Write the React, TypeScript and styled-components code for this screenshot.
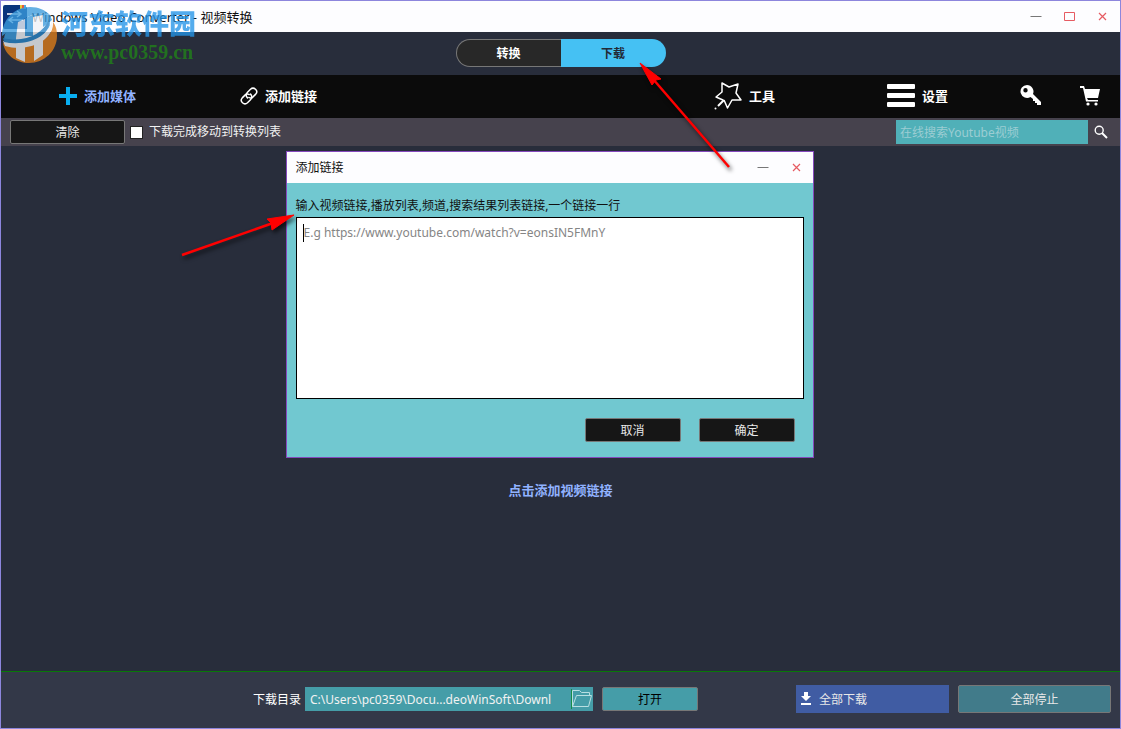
import React from "react";
import styled, { createGlobalStyle } from "styled-components";

const GlobalStyle = createGlobalStyle`
  *, *::before, *::after { box-sizing: border-box; }
  body {
    margin: 0;
    font-family: "Noto Sans", "Noto Sans CJK SC", sans-serif;
    font-size: 12px;
    line-height: 18px;
    color: #fff;
  }
  button, input, textarea { font: inherit; margin: 0; }
  button { cursor: pointer; }
  svg { display: block; flex: none; }
`;

const Window = styled.div`
  position: relative;
  display: flex;
  flex-direction: column;
  min-height: 100vh;
  overflow: hidden;
  border: 1px solid #8d86dd;
  background: #282d3b;
`;

const TitleBar = styled.header`
  display: flex;
  align-items: center;
  height: 31px;
  padding: 0 12px 0 2px;
  background: #fdfdff;
  color: #111;
`;

const AppTitle = styled.h1`
  flex: 1;
  margin: 0 0 0 5px;
  font-size: 13px;
  font-weight: 400;
`;

const WindowControls = styled.div<{ $gap: number }>`
  display: flex;
  gap: ${(p) => p.$gap}px;
`;

const IconButton = styled.button`
  display: grid;
  place-items: center;
  padding: 0;
  border: 0;
  background: none;
  color: #fff;
`;

const ModeBar = styled.div`
  display: flex;
  justify-content: center;
  height: 43px;
  padding: 7px 0 8px;
`;

const ModeTab = styled.button<{ $active?: boolean }>`
  width: 105px;
  height: 28px;
  padding: 2px 0 0;
  font-weight: 700;
  border: ${(p) => (p.$active ? "0" : "1px solid #777")};
  border-right: 0;
  border-radius: ${(p) => (p.$active ? "0 14px 14px 0" : "14px 0 0 14px")};
  background: ${(p) => (p.$active ? "#45c1f3" : "#282828")};
  color: ${(p) => (p.$active ? "#222a36" : "#fff")};
`;

const Toolbar = styled.nav`
  display: flex;
  justify-content: space-between;
  height: 43px;
  padding: 0 20px 2px 58px;
  background: #0b0b0b;
`;

const ToolGroup = styled.div<{ $gap: number }>`
  display: flex;
  align-items: center;
  gap: ${(p) => p.$gap}px;
`;

const ToolButton = styled.button<{ $accent?: boolean }>`
  display: flex;
  align-items: center;
  gap: 7px;
  padding: 0;
  border: 0;
  background: none;
  font-size: 13px;
  font-weight: 700;
  color: ${(p) => (p.$accent ? "#91b2ff" : "#fff")};
`;

const QuickActions = styled.div`
  display: flex;
  align-items: center;
  gap: 39px;
  margin-left: -40px;
`;

const FilterBar = styled.div`
  display: flex;
  align-items: center;
  height: 28px;
  padding: 0 12px 0 9px;
  background: #46424d;
`;

const Button = styled.button<{ $width: number; $tone?: "teal" | "muted" }>`
  width: ${(p) => p.$width}px;
  height: ${(p) => (p.$tone === "muted" ? 28 : 24)}px;
  padding: 2px 0 0;
  border: 1px solid #777;
  border-radius: 2px;
  background: ${(p) =>
    p.$tone === "teal" ? "#459da8" : p.$tone === "muted" ? "#417b8a" : "#161616"};
  color: ${(p) => (p.$tone === "teal" ? "#000" : "#e8e8e8")};
`;

const CheckLabel = styled.label`
  display: flex;
  align-items: center;
  gap: 6px;
  margin-left: 5px;
  color: #f2f2f2;
`;

const CheckBox = styled.input`
  appearance: none;
  width: 13px;
  height: 13px;
  margin: 0;
  border: 1px solid #222;
  background: #fff;
`;

const SearchBox = styled.input`
  width: 192px;
  height: 24px;
  margin: 0 6px 0 auto;
  padding: 0 4px;
  border: 0;
  background: #50b0b8;
  color: #fff;
  &::placeholder { color: #9ccdd3; opacity: 1; }
`;

const Content = styled.main`
  display: flex;
  flex: 1;
  flex-direction: column;
  align-items: center;
  justify-content: center;
  padding-top: 162px;
`;

const AddLink = styled.a`
  font-size: 13px;
  font-weight: 700;
  color: #91b2ff;
  text-decoration: none;
`;

const Footer = styled.footer`
  display: flex;
  align-items: center;
  justify-content: flex-end;
  height: 57px;
  padding: 0 9px 2px;
  border-top: 1px solid #087808;
  background: #333848;
`;

const FolderLabel = styled.label`
  padding-top: 2px;
`;

const PathField = styled.div`
  display: flex;
  align-items: center;
  width: 288px;
  height: 24px;
  margin: 0 9px 0 4px;
  background: #459da8;
`;

const PathInput = styled.input`
  flex: 1;
  min-width: 0;
  padding: 2px 5px 0;
  border: 0;
  background: none;
  color: #f2f2f2;
`;

const DownloadAll = styled.button`
  display: flex;
  align-items: center;
  gap: 7px;
  width: 153px;
  height: 28px;
  margin: 0 9px 0 98px;
  padding: 2px 4px 0;
  border: 0;
  background: #405ca3;
  color: #e8e8e8;
`;

const Dialog = styled.section`
  position: absolute;
  top: 150px;
  left: calc(50% - 275px);
  width: 528px;
  border: 1px solid #8549bd;
  background: #71c8d0;
  color: #111;
`;

const DialogTitle = styled.div`
  display: flex;
  align-items: center;
  justify-content: space-between;
  height: 31px;
  padding: 0 11px 0 9px;
  background: #fdfdff;
`;

const DialogHeading = styled.h2`
  margin: 0;
  font-size: 12px;
  font-weight: 400;
`;

const DialogBody = styled.div`
  padding: 14px 9px 15px;
`;

const Prompt = styled.label`
  display: block;
  height: 20px;
  white-space: nowrap;
`;

const LinkArea = styled.div`
  display: flex;
  height: 182px;
  padding: 6px;
  border: 1px solid #000;
  background: #fff;
`;

const Caret = styled.span`
  width: 1px;
  height: 18px;
  background: #000;
`;

const LinkInput = styled.textarea`
  flex: 1;
  padding: 0;
  border: 0;
  outline: 0;
  resize: none;
  background: none;
  &::placeholder { color: #858585; opacity: 1; }
`;

const DialogActions = styled.div`
  display: flex;
  justify-content: flex-end;
  gap: 18px;
  padding: 19px 9px 0;
`;

const Watermark = styled.div`
  position: absolute;
  top: 4px;
  left: 0;
  display: flex;
  gap: 3px;
  pointer-events: none;
  opacity: 0.78;
`;

const SiteName = styled.div`
  font-size: 27px;
  font-weight: 900;
  line-height: 38px;
  color: #2495e8;
`;

const SiteUrl = styled.div`
  font-family: "Liberation Serif", serif;
  font-size: 20px;
  font-weight: 700;
  line-height: 18px;
  color: #218419;
`;

const Arrows = styled.svg`
  position: absolute;
  top: -1px;
  left: calc(50% - 561px);
  pointer-events: none;
  filter: drop-shadow(2px 3px 2px rgba(0, 0, 0, 0.65));
`;

const Minimize = () => (
  <svg width="12" height="12" viewBox="0 0 12 12"><path d="M.5 5.500H11.500" stroke="#777" /></svg>
);
const Maximize = () => (
  <svg width="12" height="12" viewBox="0 0 12 12"><path d="M.5 1.500H10.500V9.500H.5Z" fill="none" stroke="#e65b62" /></svg>
);
const Close = () => (
  <svg width="10" height="10" viewBox="0 0 10 10"><path d="M1 1L8 8M8 1L1 8" stroke="#e65b62" strokeWidth="1.200" /></svg>
);

const AppIcon = () => (
  <svg width="24" height="24" viewBox="0 0 24 24">
    <path d="M2 0H21L24 3V24H2Q0 24 0 22V2Q0 0 2 0Z" fill="#08347c" />
    <path d="M17 0h2v4h-2z" fill="#e8c432" /><path d="M19 0h2v4h-2z" fill="#df5940" /><path d="M21 0h2v4h-2z" fill="#4caee2" />
    <path d="M4 9H18M14 6L18 9L14 12M20 15H6M10 12L6 15L10 18" fill="none" stroke="#fff" strokeWidth="1.500" />
  </svg>
);

const SiteLogo = () => (
  <svg width="57" height="58" viewBox="0 0 57 58">
    <path d="M2 38C4 50 15 58 28 58C43 58 56 46 56 31C56 25 55 21 52 17C53 34 33 45 2 38Z" fill="#df7d19" />
    <path d="M1 31C1 15 13 2 29 2C38 2 44 5 49 10C39 7 26 10 18 18C11 22 6 28 1 31Z" fill="#3b9bdc" />
    <path d="M18 18C26 10 39 7 49 10L51 15L42 22V11L32 14V25H25V15Z" fill="#3b9bdc" />
    <path d="M3 35C3 26 10 20 17 17V33H24V14L32 11V30C40 27 46 22 48 13C54 30 31 42 3 35Z" fill="#3b9bdc" />
    <path d="M17 17L24 14V31H32V12L42 10V50L33 56V38H24V57L15 53V33Z" fill="#f2f4f7" />
    <path d="M2 36C22 42 45 34 51 16C55 34 29 48 4 41Z" fill="#f2f4f7" />
    <path d="M2 33C23 38 42 30 48 14C51 31 26 42 3 37Z" fill="#2683c6" />
  </svg>
);

const PlusIcon = () => (
  <svg width="18" height="18" viewBox="0 0 18 18"><path d="M9 0V18M0 9H18" stroke="#08aef0" strokeWidth="4" /></svg>
);

const ChainIcon = () => (
  <svg width="18" height="18" viewBox="0 0 24 24" fill="none" stroke="#fff" strokeWidth="2" strokeLinecap="round">
    <path d="M10 14.500C7.500 12 8 9 10 7L14 3C18.500 -1 25 5 21 9.500L17 13.500C15.500 15 13.500 15 12 14" />
    <path d="M14 9.500C16.500 12 16 15 14 17L10 21C5.500 25 -1 19 3 14.500L7 10.500C8.500 9 10.500 9 12 10" />
  </svg>
);

const WandIcon = () => (
  <svg width="28" height="28" viewBox="0 0 28 28" fill="none" stroke="#fff" strokeWidth="1.500" strokeLinejoin="round">
    <path d="M9 18L2 15L8 10L8 1L15 5L24 2L22 11L27 18L18 18L13.500 26L10 18" />
    <path d="M10 18L4 24" strokeWidth="2" /><circle cx="1.500" cy="26.500" r="1" fill="#fff" stroke="none" />
  </svg>
);

const MenuIcon = () => (
  <svg width="28" height="24" viewBox="0 0 28 24" fill="#fff">
    <rect width="28" height="5" rx="1" /><rect y="9" width="28" height="5" rx="1" /><rect y="18" width="28" height="5" rx="1" />
  </svg>
);

const KeyIcon = () => (
  <svg width="21" height="21" viewBox="0 0 21 21">
    <path fillRule="evenodd" fill="#fff" d="M7 0A6.500 6.500 0 0 1 13 9L21 17V20H17V18H15V16H13V14L10.500 12A6.500 6.500 0 1 1 7 0ZM5.500 3A2.200 2.200 0 1 0 5.500 7.400A2.200 2.200 0 1 0 5.500 3Z" />
  </svg>
);

const CartIcon = () => (
  <svg width="20" height="20" viewBox="0 0 20 20" fill="#fff">
    <path d="M0 0H4L5 3H20L18 12H7L8 14H18V15.500H6L3 2H0Z" /><circle cx="8" cy="18" r="1.600" /><circle cx="16" cy="18" r="1.600" />
  </svg>
);

const SearchIcon = () => (
  <svg width="14" height="14" viewBox="0 0 14 14" fill="none" stroke="#fff">
    <circle cx="5.200" cy="5.200" r="4" strokeWidth="1.400" /><path d="M8 8L13 13" strokeWidth="2" />
  </svg>
);

const FolderIcon = () => (
  <svg width="22" height="22" viewBox="0 0 22 22" fill="none" stroke="#b8dfe2">
    <path d="M1.500 18.500V2.500H8.500L10.500 4.500H18.500V7.500M1.500 18.500L5.500 7.500H20.500L17.500 18.500H1.500" />
    <path d="M.5 1V21" stroke="#168c49" />
  </svg>
);

const DownloadIcon = () => (
  <svg width="12" height="16" viewBox="0 0 12 16" fill="#fff"><path d="M4 0H8V4H11L6 9L1 4H4ZM1 11H11V13H1Z" /></svg>
);

export default function App() {
  return (
    <>
      <GlobalStyle />
      <Window>
        <TitleBar>
          <AppIcon />
          <AppTitle>Windows Video Converter - 视频转换</AppTitle>
          <WindowControls $gap={22}>
            <IconButton aria-label="最小化"><Minimize /></IconButton>
            <IconButton aria-label="最大化"><Maximize /></IconButton>
            <IconButton aria-label="关闭"><Close /></IconButton>
          </WindowControls>
        </TitleBar>
        <ModeBar>
          <ModeTab>转换</ModeTab>
          <ModeTab $active>下载</ModeTab>
        </ModeBar>
        <Toolbar>
          <ToolGroup $gap={104}>
            <ToolButton $accent><PlusIcon />添加媒体</ToolButton>
            <ToolButton><ChainIcon />添加链接</ToolButton>
          </ToolGroup>
          <ToolGroup $gap={112}>
            <ToolButton><WandIcon />工具</ToolButton>
            <ToolButton><MenuIcon />设置</ToolButton>
            <QuickActions>
              <IconButton aria-label="注册"><KeyIcon /></IconButton>
              <IconButton aria-label="购买"><CartIcon /></IconButton>
            </QuickActions>
          </ToolGroup>
        </Toolbar>
        <FilterBar>
          <Button $width={115}>清除</Button>
          <CheckLabel><CheckBox type="checkbox" />下载完成移动到转换列表</CheckLabel>
          <SearchBox type="text" aria-label="搜索" placeholder="在线搜索Youtube视频" />
          <IconButton aria-label="搜索"><SearchIcon /></IconButton>
        </FilterBar>
        <Content><AddLink href="#add">点击添加视频链接</AddLink></Content>
        <Footer>
          <FolderLabel htmlFor="folder">下载目录</FolderLabel>
          <PathField>
            <PathInput id="folder" readOnly value="C:\Users\pc0359\Docu...deoWinSoft\Downl" />
            <IconButton aria-label="浏览"><FolderIcon /></IconButton>
          </PathField>
          <Button $width={96} $tone="teal">打开</Button>
          <DownloadAll><DownloadIcon />全部下载</DownloadAll>
          <Button $width={153} $tone="muted">全部停止</Button>
        </Footer>
        <Dialog role="dialog" aria-labelledby="dialog-title">
          <DialogTitle>
            <DialogHeading id="dialog-title">添加链接</DialogHeading>
            <WindowControls $gap={23}>
              <IconButton aria-label="最小化"><Minimize /></IconButton>
              <IconButton aria-label="关闭"><Close /></IconButton>
            </WindowControls>
          </DialogTitle>
          <DialogBody>
            <Prompt htmlFor="links">输入视频链接,播放列表,频道,搜索结果列表链接,一个链接一行</Prompt>
            <LinkArea>
              <Caret />
              <LinkInput id="links" placeholder="E.g https://www.youtube.com/watch?v=eonsIN5FMnY" />
            </LinkArea>
            <DialogActions>
              <Button $width={96}>取消</Button>
              <Button $width={96}>确定</Button>
            </DialogActions>
          </DialogBody>
        </Dialog>
        <Watermark>
          <SiteLogo />
          <div>
            <SiteName>河东软件园</SiteName>
            <SiteUrl>www.pc0359.cn</SiteUrl>
          </div>
        </Watermark>
        <Arrows width="1121" height="300" viewBox="0 0 1121 300" aria-hidden="true">
          <g fill="#f00" stroke="#f00">
            <path d="M640 63L661 79L656 80L652 85Z" /><path d="M653 79L729 167" strokeWidth="2.500" />
            <path d="M294 215L267 219L271 223L272 230Z" /><path d="M273 223L182 255" strokeWidth="2.500" />
          </g>
        </Arrows>
      </Window>
    </>
  );
}
